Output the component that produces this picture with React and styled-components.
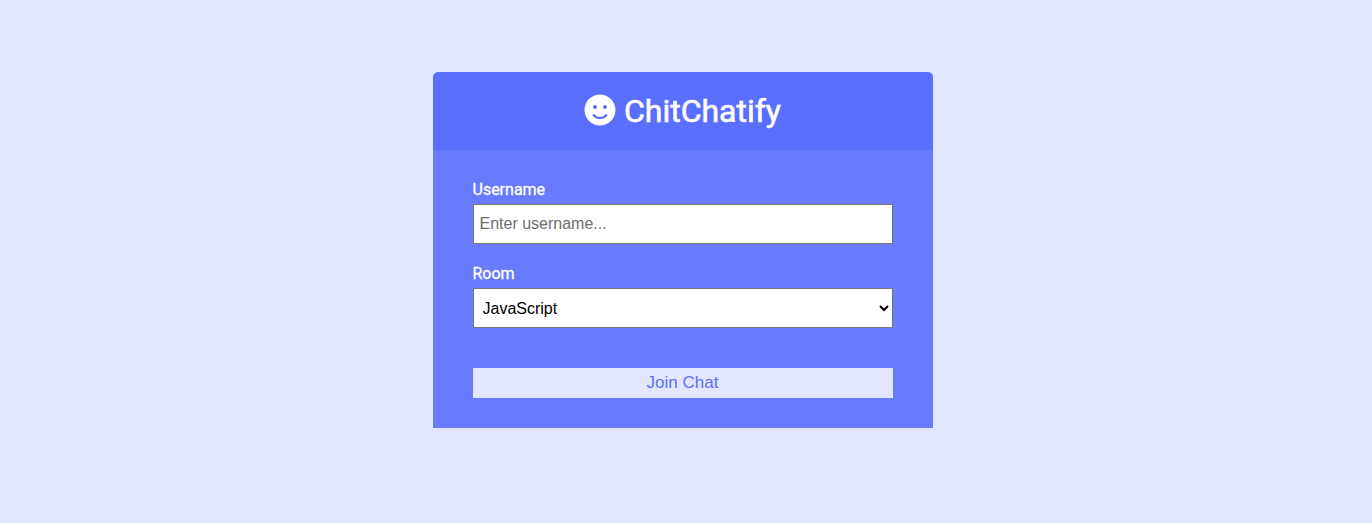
import React from "react";
import styled, { createGlobalStyle } from "styled-components";
import { FaSmile } from "react-icons/fa";

const GlobalStyle = createGlobalStyle`
  * { box-sizing: border-box; margin: 0; padding: 0; }
  body {
    font-family: Roboto, sans-serif;
    font-size: 16px;
    background: #e2e6ff;
    overflow: hidden;
  }
`;

const Container = styled.div`
  width: 500px;
  margin: 72px 0 0 432.5px;
  color: #fff;
`;

const Header = styled.header`
  display: flex;
  align-items: center;
  justify-content: center;
  height: 78px;
  background: #5a6fff;
  border-radius: 5px 5px 0 0;
`;

const Title = styled.h1`
  font-size: 32px;
  font-weight: 400;
  line-height: 38px;
  -webkit-text-stroke: 0.6px #fff;
`;

const SmileIcon = styled(FaSmile)`
  display: inline-block;
  width: 32px;
  height: 32px;
  vertical-align: -4px;
`;

const Main = styled.main`
  height: 278px;
  padding: 30px 40px;
  background: #687bff;
`;

const FormControl = styled.div`
  margin-bottom: 20px;
`;

const Label = styled.label`
  display: block;
  height: 19px;
  line-height: 19px;
  -webkit-text-stroke: 0.3px #fff;
  margin-bottom: 5px;
`;

const TextInput = styled.input`
  display: block;
  width: 100%;
  height: 40px;
  padding: 5px;
  font: 16px "Liberation Sans", sans-serif;
  &::placeholder { color: #6e6e6e; }
`;

const Select = styled.select`
  display: block;
  width: 100%;
  height: 40px;
  padding: 5px;
  font: 16px "Liberation Sans", sans-serif;
  background: #fff;
  color: #000;
`;

const JoinButton = styled.button`
  display: block;
  width: 100%;
  height: 30px;
  margin-top: 40px;
  padding: 5px 20px;
  border: 0;
  background: #e2e6ff;
  color: #5a6fff;
  font: 17px "Liberation Sans", sans-serif;
`;

export default function App() {
  return (
    <>
      <GlobalStyle />
      <Container>
        <Header>
          <Title><SmileIcon /> ChitChatify</Title>
        </Header>
        <Main>
          <FormControl>
            <Label htmlFor="username">Username</Label>
            <TextInput id="username" placeholder="Enter username..." />
          </FormControl>
          <FormControl>
            <Label htmlFor="room">Room</Label>
            <Select id="room">
              <option>JavaScript</option>
            </Select>
          </FormControl>
          <JoinButton type="button">Join Chat</JoinButton>
        </Main>
      </Container>
    </>
  );
}
